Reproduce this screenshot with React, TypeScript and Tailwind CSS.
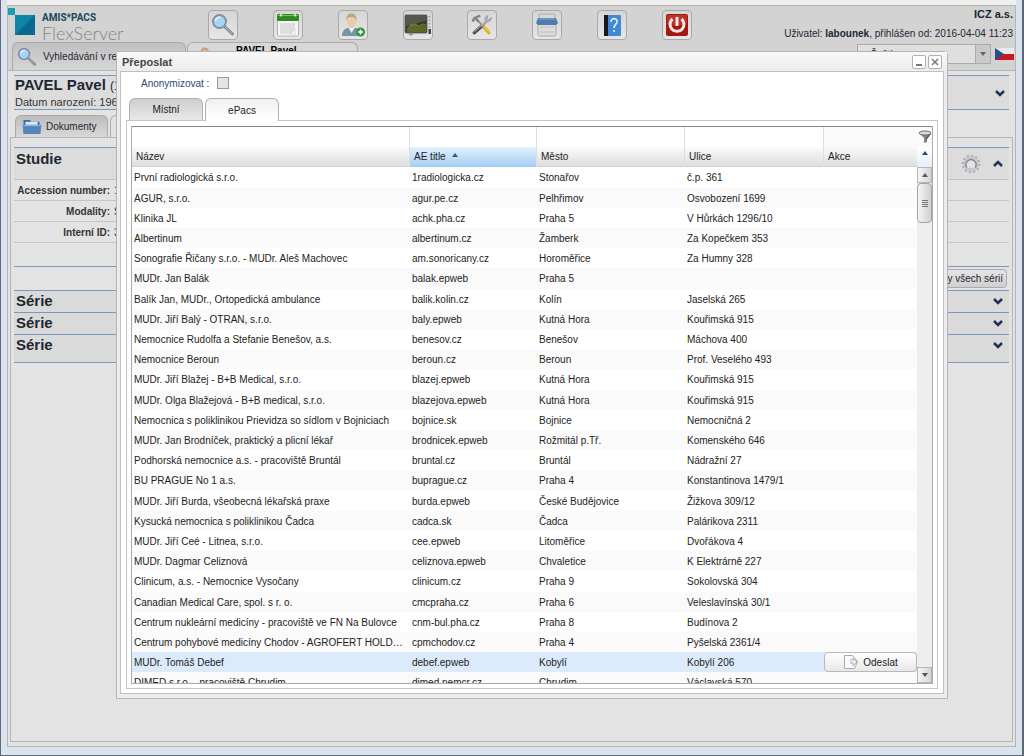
import { clsx } from 'clsx';
import type { ReactNode } from 'react';

interface Facility {
  name: string;
  ae: string;
  city: string;
  street: string;
  selected?: boolean;
}

const facilities: Facility[] = [
  { name: 'První radiologická s.r.o.', ae: '1radiologicka.cz', city: 'Stonařov', street: 'č.p. 361' },
  { name: 'AGUR, s.r.o.', ae: 'agur.pe.cz', city: 'Pelhřimov', street: 'Osvobození 1699' },
  { name: 'Klinika JL', ae: 'achk.pha.cz', city: 'Praha 5', street: 'V Hůrkách 1296/10' },
  { name: 'Albertinum', ae: 'albertinum.cz', city: 'Žamberk', street: 'Za Kopečkem 353' },
  { name: 'Sonografie Řičany s.r.o. - MUDr. Aleš Machovec', ae: 'am.sonoricany.cz', city: 'Horoměřice', street: 'Za Humny 328' },
  { name: 'MUDr. Jan Balák', ae: 'balak.epweb', city: 'Praha 5', street: '' },
  { name: 'Balík Jan, MUDr., Ortopedická ambulance', ae: 'balik.kolin.cz', city: 'Kolín', street: 'Jaselská 265' },
  { name: 'MUDr. Jiří Balý - OTRAN, s.r.o.', ae: 'baly.epweb', city: 'Kutná Hora', street: 'Kouřimská 915' },
  { name: 'Nemocnice Rudolfa a Stefanie Benešov, a.s.', ae: 'benesov.cz', city: 'Benešov', street: 'Máchova 400' },
  { name: 'Nemocnice Beroun', ae: 'beroun.cz', city: 'Beroun', street: 'Prof. Veselého 493' },
  { name: 'MUDr. Jiří Blažej - B+B Medical, s.r.o.', ae: 'blazej.epweb', city: 'Kutná Hora', street: 'Kouřimská 915' },
  { name: 'MUDr. Olga Blažejová - B+B medical, s.r.o.', ae: 'blazejova.epweb', city: 'Kutná Hora', street: 'Kouřimská 915' },
  { name: 'Nemocnica s poliklinikou Prievidza so sídlom v Bojniciach', ae: 'bojnice.sk', city: 'Bojnice', street: 'Nemocničná 2' },
  { name: 'MUDr. Jan Brodníček, praktický a plicní lékař', ae: 'brodnicek.epweb', city: 'Rožmitál p.Tř.', street: 'Komenského 646' },
  { name: 'Podhorská nemocnice a.s. - pracoviště Bruntál', ae: 'bruntal.cz', city: 'Bruntál', street: 'Nádražní 27' },
  { name: 'BU PRAGUE No 1 a.s.', ae: 'buprague.cz', city: 'Praha 4', street: 'Konstantinova 1479/1' },
  { name: 'MUDr. Jiří Burda, všeobecná lékařská praxe', ae: 'burda.epweb', city: 'České Budějovice', street: 'Žižkova 309/12' },
  { name: 'Kysucká nemocnica s poliklinikou Čadca', ae: 'cadca.sk', city: 'Čadca', street: 'Palárikova 2311' },
  { name: 'MUDr. Jiří Ceé - Litnea, s.r.o.', ae: 'cee.epweb', city: 'Litoměřice', street: 'Dvořákova 4' },
  { name: 'MUDr. Dagmar Celiznová', ae: 'celiznova.epweb', city: 'Chvaletice', street: 'K Elektrárně 227' },
  { name: 'Clinicum, a.s. - Nemocnice Vysočany', ae: 'clinicum.cz', city: 'Praha 9', street: 'Sokolovská 304' },
  { name: 'Canadian Medical Care, spol. s r. o.', ae: 'cmcpraha.cz', city: 'Praha 6', street: 'Veleslavínská 30/1' },
  { name: 'Centrum nukleární medicíny - pracoviště ve FN Na Bulovce', ae: 'cnm-bul.pha.cz', city: 'Praha 8', street: 'Budínova 2' },
  { name: 'Centrum pohybové medicíny Chodov - AGROFERT HOLDING', ae: 'cpmchodov.cz', city: 'Praha 4', street: 'Pyšelská 2361/4' },
  { name: 'MUDr. Tomáš Debef', ae: 'debef.epweb', city: 'Kobylí', street: 'Kobylí 206', selected: true },
  { name: 'DIMED s.r.o. - pracoviště Chrudim', ae: 'dimed.nemcr.cz', city: 'Chrudim', street: 'Václavská 570' }
];

function SearchIcon({ className }: { className?: string }) {
  return (
    <svg viewBox="0 0 24 24" className={className} aria-hidden="true">
      <path d="M14 14l7.5 7" stroke="#85858a" strokeWidth="3" strokeLinecap="round" />
      <path d="M14 14l7 6.500" stroke="#b9b9be" strokeWidth="1" strokeLinecap="round" />
      <circle cx="8.500" cy="8.500" r="6.500" fill="#a5d4f4" stroke="#8090a5" strokeWidth="2" />
      <path d="M4.500 8a4 4 0 0 1 5-3.500" stroke="#e4f4ff" strokeWidth="1.500" fill="none" />
    </svg>
  );
}

function CalendarIcon() {
  return (
    <svg viewBox="0 0 24 24" className="size-6" aria-hidden="true">
      <rect x="1.500" y="2" width="21" height="21" rx="1" fill="#f4f4f4" stroke="#b4b4b4" />
      <rect x="1" y="1" width="22" height="7" rx="1.500" fill="#2f8a24" />
      <path d="M2 2.500h20" stroke="#7dc468" />
      <path d="M5 .5v3M19 .5v3" stroke="#e9f5e6" strokeWidth="1.500" />
      <path d="M4 10h15v7l-3 4H4z" fill="#dededf" />
      <path d="M19 16l-4 5h4z" fill="#fff" stroke="#c6c6c6" strokeWidth=".5" />
    </svg>
  );
}

function PatientIcon({ className, plus = false }: { className?: string; plus?: boolean }) {
  return (
    <svg viewBox="0 0 24 24" className={className} aria-hidden="true">
      <path d="M1 23c0-6 4-8 6-8h7c3 0 6 2 6 8z" fill="#7895a3" />
      <path d="M7.500 15l3 5 3-5z" fill="#edf0f0" />
      <ellipse cx="10.500" cy="8.500" rx="4.500" ry="6.500" fill="#e6cdb0" />
      <path d="M5.500 8C5 3 7 .5 10.500.5S16 3 15.500 8c-1-4-3-4-5-4s-4 0-5 4z" fill="#c2a47c" />
      {plus && (
        <>
          <circle cx="19.500" cy="19" r="4.500" fill="#33933a" />
          <path d="M19.500 16.500v5M17 19h5" stroke="#fff" strokeWidth="1.500" />
        </>
      )}
    </svg>
  );
}

function MonitorIcon() {
  return (
    <svg viewBox="0 0 28 24" className="h-6 w-7" aria-hidden="true">
      <rect x="1" y="2" width="22" height="18" rx="1" fill="#34362f" stroke="#6c6d66" />
      <path d="M1.500 2.500h21v5l-21 6z" fill="#56574f" />
      <path d="M3 17c3-1 3-6 5-5 2 0 2-2 4-1s2 4 5 2 3 0 5 0v6H3z" fill="#5d6826" />
      <path d="M3 16c3-1 3-5 5-4s3-2 4-1 2 3 5 1 3 0 5 0" stroke="#87963a" fill="none" />
      <path d="M25.500 3v12" stroke="#999" strokeWidth="1.500" strokeDasharray="1.500 2" />
      <rect x="24.500" y="16" width="2.500" height="5" fill="#444" />
      <path d="M5 21.500h4" stroke="#8c9451" strokeWidth="1.500" />
    </svg>
  );
}

function ToolsIcon() {
  return (
    <svg viewBox="0 0 28 28" className="size-6" aria-hidden="true">
      <path d="M9 9l5 5" stroke="#8a8a8a" strokeWidth="2" />
      <path d="M14 14l8 9" stroke="#dfb41c" strokeWidth="4" strokeLinecap="round" />
      <path d="M15 14l7 8" stroke="#f7dc60" strokeWidth="1" />
      <path d="M3 10l2-4 7-3M6 6l4 4" stroke="#858585" strokeWidth="3" fill="none" />
      <path d="M5 23l9-8" stroke="#505050" strokeWidth="4" strokeLinecap="round" />
      <path d="M13 16l7-7" stroke="#9a9a9a" strokeWidth="3" />
      <path d="M5 22l14-13" stroke="#c8c8c8" strokeWidth="1" />
      <path d="M21 3c-4 1-5 5-2 7 3 1 6-1 6-5l-3 3-2-2z" fill="#b4b7b9" stroke="#85888a" strokeWidth=".7" />
    </svg>
  );
}

function PrinterIcon() {
  return (
    <svg viewBox="0 0 24 24" className="size-6" aria-hidden="true">
      <path d="M4 6V2q0-1 1-1h14q1 0 1 1v4z" fill="#d8d8d8" stroke="#aaa" />
      <rect x="3" y="10" width="18" height="13" rx="1.500" fill="#dcdcdc" stroke="#aaa" />
      <path d="M3 5h18l2 5-2 2H3l-2-2z" fill="#4f7cad" />
      <path d="M4 6h16" stroke="#84abd4" />
      <path d="M5 14h14M5 19h14" stroke="#bcbcbc" />
    </svg>
  );
}

function HelpIcon() {
  return (
    <svg viewBox="0 0 24 24" className="size-6" aria-hidden="true">
      <rect x="4" y="2" width="17" height="21" rx="1" fill="#4388d3" />
      <path d="M4 2h4v21H4z" fill="#15191f" />
      <path d="M11 9c0-5 7-4 6 0 0 2-3 2.500-3 6M14 17v2" stroke="#dcecff" strokeWidth="1.700" fill="none" />
    </svg>
  );
}

function PowerIcon() {
  return (
    <svg viewBox="0 0 24 24" className="size-6" aria-hidden="true">
      <rect x="1" y="1" width="22" height="22" rx="2" fill="#a31812" />
      <path d="M2 2h20v8q-10 5-20 1z" fill="#b9352b" />
      <path d="M7.500 6a7 7 0 1 0 9 0" stroke="#f3e6e4" strokeWidth="3" fill="none" />
      <path d="M12 4v9" stroke="#f3e6e4" strokeWidth="3" />
    </svg>
  );
}

function FolderIcon() {
  return (
    <svg viewBox="0 0 20 17" className="h-4 w-5" aria-hidden="true">
      <path d="M1 1h7l1 2h9v12H1z" fill="#416b9d" />
      <path d="M3 3h13v4H3z" fill="#dce7f1" />
      <path d="M0 6h20l-1 10H1z" fill="#5585bd" />
      <path d="M1 7h18" stroke="#9dc0e3" />
    </svg>
  );
}

function GearIcon() {
  return (
    <svg viewBox="0 0 22 22" className="size-5" aria-hidden="true">
      <circle cx="11" cy="11" r="9" fill="none" stroke="#a9a9b0" strokeWidth="2.500" strokeDasharray="2.200 2.500" />
      <circle cx="11" cy="11" r="6.500" fill="none" stroke="#c6c6cc" strokeWidth="4" />
      <path d="M6.500 15a5.500 5.500 0 1 1 9 0" fill="#e4e4e4" stroke="#85858d" strokeWidth="1.500" />
    </svg>
  );
}

function Chevron({ up = false }: { up?: boolean }) {
  return (
    <svg viewBox="0 0 10 8" className="h-2 w-2.5" aria-hidden="true">
      <path d={up ? 'M1 6l4-4 4 4' : 'M1 2l4 4 4-4'} stroke="#1f3455" strokeWidth="2.500" fill="none" />
    </svg>
  );
}

function Triangle({ down = false, className }: { down?: boolean; className?: string }) {
  return (
    <svg viewBox="0 0 6 4" className={clsx('h-1 w-1.5', className)} aria-hidden="true">
      <path d={down ? 'M0 0h6L3 4z' : 'M0 4h6L3 0z'} fill="currentColor" />
    </svg>
  );
}

const toolbar: { label: string; icon: ReactNode }[] = [
  { label: 'Vyhledávání', icon: <SearchIcon className="size-6" /> },
  { label: 'Kalendář', icon: <CalendarIcon /> },
  { label: 'Nový pacient', icon: <PatientIcon className="size-6" plus /> },
  { label: 'Monitor', icon: <MonitorIcon /> },
  { label: 'Nastavení', icon: <ToolsIcon /> },
  { label: 'Tisk', icon: <PrinterIcon /> },
  { label: 'Nápověda', icon: <HelpIcon /> },
  { label: 'Odhlásit', icon: <PowerIcon /> }
];

function Header() {
  return (
    <header className="border-b border-[#b5b5b5] bg-[#d3d3d3]">
      <div className="flex h-9">
        <div className="flex w-[200px] shrink-0">
          <svg viewBox="0 0 28 28" className="mt-0.5 size-7" aria-hidden="true">
            <rect width="7" height="7" fill="#1b9aba" />
            <path d="M7 7h20v20H7z" fill="#0e84a6" />
            <path d="M7 27L27 7v20z" fill="#0a6a8e" />
          </svg>
          <div className="ml-1.5 pt-1.5">
            <div className="font-[Roboto,sans-serif] text-[10px] leading-3 font-bold text-[#19485a]">AMIS*PACS</div>
            <div className="font-[Lato,sans-serif] text-[18px] leading-[18px] font-light text-[#858585]">FlexServer</div>
          </div>
        </div>
        <nav className="mt-1 flex w-[484px] shrink-0 items-start justify-between">
          {toolbar.map((item) => (
            <button
              key={item.label}
              aria-label={item.label}
              className="flex size-[30px] items-center justify-center rounded-sm border border-[#a9a9a9] bg-linear-to-b from-[#d6d6d6] to-[#e6e6e6]"
            >
              {item.icon}
            </button>
          ))}
        </nav>
        <div className="flex-1 pr-0.5 text-right">
          <div className="text-[11px] leading-4 font-bold">ICZ a.s.</div>
          <div className="mt-1 text-[10px] leading-4 whitespace-nowrap">
            Uživatel: <b>labounek</b>, přihlášen od: 2016-04-04 11:23
          </div>
        </div>
      </div>
      <div className="flex h-7 gap-px pl-1">
        <button className="flex w-[174px] items-center gap-1.5 overflow-hidden rounded-t-md border border-b-0 border-[#aaa] bg-linear-to-b from-[#c0c0c0] to-[#d6d6d6] pl-1 text-[10px] whitespace-nowrap">
          <SearchIcon className="size-5 shrink-0" />
          Vyhledávání v registru
        </button>
        <button className="flex w-[171px] items-start gap-5 rounded-t-md border border-b-0 border-[#aaa] bg-[#d8d8d8] pl-2 text-[10px] font-bold text-black">
          <PatientIcon className="mt-1 size-5" />
          PAVEL Pavel
        </button>
        <div className="ml-auto flex items-start pt-0.5 pr-px">
          <select
            aria-label="Jazyk"
            className="h-5 w-[118px] appearance-none border border-r-0 border-[#aaa] bg-[#dfdfdf] pl-3 text-[10px]"
          >
            <option>Čeština</option>
          </select>
          <span className="mr-1 flex h-5 w-4 items-center justify-center border border-[#aaa] bg-[#c9c9c9] text-[#666]">
            <Triangle down className="size-2" />
          </span>
          <svg viewBox="0 0 19 12" className="mt-1 h-3 w-[19px]" aria-hidden="true">
            <path d="M0 0h19v6H0z" fill="#e8e8e8" />
            <path d="M0 6h19v6H0z" fill="#c9171f" />
            <path d="M0 0l9 6-9 6z" fill="#24508d" />
          </svg>
        </div>
      </div>
    </header>
  );
}

function Series({ tall = false }: { tall?: boolean }) {
  return (
    <section className={clsx('flex items-start justify-between border-b border-[#7b97c2] bg-[#dadada] pl-0.5', tall ? 'h-7' : 'h-[22px]')}>
      <h2 className="text-[15px] leading-5 font-bold">Série</h2>
      <button aria-label="Rozbalit sérii" className="mt-1.5 mr-1.5">
        <Chevron />
      </button>
    </section>
  );
}

function PatientPage() {
  return (
    <main className="flex flex-1 flex-col bg-[#e3e3e3]">
      <div className="mx-1.5 mt-1 flex h-[35px] items-center justify-between border-y border-[#7b97c2] bg-[#dcdcdc]">
        <div className="pl-px">
          <div className="text-[15px] leading-[18px] font-bold">
            PAVEL Pavel <span className="text-[12px] font-normal">(1960)</span>
          </div>
          <div className="text-[11px] leading-[14px] text-[#333]">Datum narození: 1960-01-01</div>
        </div>
        <button aria-label="Rozbalit pacienta" className="mr-1">
          <Chevron />
        </button>
      </div>
      <div className="mt-[5px] flex h-[22px] gap-0.5 pl-[7px]">
        <button className="flex w-[93px] items-center gap-1 rounded-t-md border border-b-0 border-[#aaa] bg-linear-to-b from-[#bdbdbd] to-[#d8d8d8] pl-1.5 text-[10px]">
          <FolderIcon />
          Dokumenty
        </button>
        <div className="w-[93px] rounded-t-md border border-b-0 border-[#aaa] bg-[#e3e3e3]" />
      </div>
      <div className="mx-0.5 mb-1 flex-1 border border-[#b5b5b5] px-[3px] pt-[9px]">
        <section className="border-b border-[#7b97c2] pb-[23px]">
          <div className="flex h-[33px] items-start justify-between border-t border-b border-t-[#7b97c2] border-b-[#c5c5c5] bg-[#dcdcdc] pl-0.5">
            <h2 className="text-[15px] leading-[22px] font-bold">Studie</h2>
            <div className="mt-1.5 mr-1.5 flex items-center gap-3">
              <button aria-label="Nastavení studie">
                <GearIcon />
              </button>
              <button aria-label="Sbalit studii">
                <Chevron up />
              </button>
            </div>
          </div>
          <dl className="text-[10px] leading-[22px] text-[#333]">
            {[
              ['Accession number:', '1234'],
              ['Modality:', 'SR'],
              ['Interní ID:', '3021']
            ].map(([label, value]) => (
              <div key={label} className="flex h-[21px] gap-1 border-b border-[#c5c5c5]">
                <dt className="w-24 text-right font-bold whitespace-nowrap">{label}</dt>
                <dd>{value}</dd>
              </div>
            ))}
          </dl>
        </section>
        <div className="flex h-6 items-center justify-end border-b border-[#7b97c2] pr-0.5">
          <button className="h-[19px] rounded-sm border border-[#aaa] bg-linear-to-b from-[#e5e5e5] to-[#cfcfcf] px-[3px] text-[10px] leading-4">
            Snímky všech sérií
          </button>
        </div>
        <Series />
        <Series />
        <Series tall />
      </div>
    </main>
  );
}

function HeaderCell({ label, sorted = false, filter = true }: { label: string; sorted?: boolean; filter?: boolean }) {
  return (
    <th
      scope="col"
      aria-sort={sorted ? 'ascending' : undefined}
      className="border-r border-[#dedede] p-0 text-left font-normal last:border-r-0"
    >
      <div className="h-5">
        {filter ? (
          <input aria-label={`Filtr ${label}`} className="block h-5 w-full bg-white px-1 outline-none" />
        ) : (
          <div className="h-5 bg-[#fafafa]" />
        )}
      </div>
      <div
        className={clsx(
          'flex h-5 items-center gap-1.5 border-b bg-linear-to-b pl-1',
          sorted ? 'border-[#a5c8ee] from-[#e2f0fd] to-[#a9cff6]' : 'border-[#d0d0d0] from-[#fafafa] to-[#dfdfdf]'
        )}
      >
        {label}
        {sorted && <Triangle className="mb-1 text-[#40566f]" />}
      </div>
    </th>
  );
}

function SendButton() {
  return (
    <button className="flex h-5 w-full items-center justify-center gap-1 rounded-sm border border-[#b8b8b8] bg-linear-to-b from-white to-[#e8e8e8]">
      <svg viewBox="0 0 16 16" className="size-4" aria-hidden="true">
        <path d="M1.500 1.500h8l5 6-3 7h-10z" fill="#fafafa" stroke="#aaa" />
        <path d="M7 6h3V4l4 4-4 4V9H7" fill="#eee" stroke="#b0b0b0" />
      </svg>
      Odeslat
    </button>
  );
}

function FacilityTable() {
  return (
    <div className="flex h-[558px] border border-[#aaa] border-t-[#888]">
      <div className="min-w-0 flex-1 overflow-hidden">
        <table className="w-full table-fixed border-separate border-spacing-0">
          <colgroup>
            <col />
            <col className="w-[127px]" />
            <col className="w-[148px]" />
            <col className="w-[139px]" />
            <col className="w-[93px]" />
          </colgroup>
          <thead>
            <tr>
              <HeaderCell label="Název" />
              <HeaderCell label="AE title" sorted />
              <HeaderCell label="Město" />
              <HeaderCell label="Ulice" />
              <HeaderCell label="Akce" filter={false} />
            </tr>
          </thead>
          <tbody>
            {facilities.map((row) => (
              <tr
                key={row.ae}
                className={clsx(
                  'h-5 nth-[5n+1]:h-[21px]',
                  row.selected ? 'bg-[#dcebfc]' : 'odd:bg-white even:bg-[#fafafa]'
                )}
              >
                <td className="truncate py-0 pr-1.5 pl-0.5">{row.name}</td>
                <td className="truncate py-0 pl-0.5">{row.ae}</td>
                <td className="truncate py-0 pl-0.5">{row.city}</td>
                <td className="truncate py-0 pl-0.5">{row.street}</td>
                <td className="p-0">{row.selected && <SendButton />}</td>
              </tr>
            ))}
          </tbody>
        </table>
      </div>
      <div className="flex w-[15px] flex-col bg-[#eee]">
        <button aria-label="Filtrovat" className="flex h-5 items-center justify-center bg-[#fafafa]">
          <svg viewBox="0 0 14 14" className="size-3.5" aria-hidden="true">
            <path d="M1 3l5 5v5l3-1V8l4-5z" fill="#888" />
            <path d="M8 8l5-5v1L9 9v3z" fill="#444" />
            <ellipse cx="7" cy="3" rx="6" ry="2" fill="#ddd" stroke="#666" />
          </svg>
        </button>
        <button aria-label="Skrýt filtr" className="flex h-5 items-start justify-center bg-linear-to-b from-white to-[#e4effa] pt-1 text-[#2a4a6f]">
          <Triangle />
        </button>
        <button aria-label="Nahoru" className="flex h-4 items-center justify-center border border-[#b5b5b5] bg-linear-to-r from-[#f5f5f5] to-[#d5d5d5] text-[#555]">
          <Triangle />
        </button>
        <div className="flex h-10 flex-col items-center justify-center gap-px rounded-sm border border-[#a5a5a5] bg-linear-to-r from-[#f5f5f5] to-[#d0d0d0]">
          <span className="h-px w-1.5 bg-[#777]" />
          <span className="h-px w-1.5 bg-[#777]" />
          <span className="h-px w-1.5 bg-[#777]" />
          <span className="h-px w-1.5 bg-[#777]" />
        </div>
        <button aria-label="Dolů" className="mt-auto flex h-4 items-center justify-center border border-[#b5b5b5] bg-linear-to-r from-[#f5f5f5] to-[#d5d5d5] text-[#555]">
          <Triangle down />
        </button>
      </div>
    </div>
  );
}

function ForwardDialog() {
  return (
    <div
      role="dialog"
      aria-labelledby="forward-title"
      className="absolute top-[51px] right-[74px] left-[115px] rounded-t-sm border border-[#b5b5b5] bg-[#ececec] px-[3px] pb-1 text-[10px] text-[#222]"
    >
      <div className="-mx-[3px] flex h-[19px] items-center justify-between bg-linear-to-b from-[#f8f8f8] to-[#ececec] px-[5px]">
        <h1 id="forward-title" className="text-[11px] leading-4 font-bold text-[#444]">Přeposlat</h1>
        <div className="flex gap-0.5">
          <button aria-label="Minimalizovat" className="flex size-3.5 items-end justify-center rounded-xs border border-[#b0b0b0] bg-white pb-0.5">
            <span className="h-0.5 w-1.5 bg-[#777]" />
          </button>
          <button aria-label="Zavřít" className="flex size-3.5 items-center justify-center rounded-xs border border-[#b0b0b0] bg-white">
            <svg viewBox="0 0 8 8" className="size-2" aria-hidden="true">
              <path d="M1 1l6 6M7 1L1 7" stroke="#777" strokeWidth="1.500" />
            </svg>
          </button>
        </div>
      </div>
      <div className="border border-[#c0c0c0] bg-white px-[5px] pb-1">
        <div className="flex h-[26px] items-start gap-2 pt-1 pl-[15px]">
          <label htmlFor="anonymize" className="text-[#2c4a6e]">Anonymizovat :</label>
          <input id="anonymize" type="checkbox" className="mt-px size-3 appearance-none border border-[#999] bg-[#e4e4e4]" />
        </div>
        <div role="tablist" className="flex gap-0.5 pl-[3px]">
          <button role="tab" aria-selected="false" className="h-[22px] w-[74px] rounded-t-md border border-b-0 border-[#b0b0b0] bg-linear-to-b from-[#cfcfcf] to-[#e8e8e8]">
            Místní
          </button>
          <button role="tab" aria-selected="true" className="z-10 -mb-px h-[23px] w-[74px] rounded-t-md border border-b-0 border-[#b0b0b0] bg-linear-to-b from-[#f0f0f0] to-white">
            ePacs
          </button>
        </div>
        <div role="tabpanel" className="border border-[#c5c5c5] px-1 pt-[5px] pb-1">
          <FacilityTable />
        </div>
      </div>
    </div>
  );
}

export default function App() {
  return (
    <div className="relative flex min-h-screen flex-col border-r-2 border-b border-l border-[#626873] bg-[#d9e3ef] px-1.5 pb-2 font-['Liberation_Sans',Arial,sans-serif] text-[#1d2733]">
      <div className="h-[5px] shrink-0 bg-[#efefef]" />
      <div className="flex flex-1 flex-col border border-[#b5b5a8] bg-[#e3e3e3]">
        <Header />
        <PatientPage />
      </div>
      <ForwardDialog />
    </div>
  );
}
